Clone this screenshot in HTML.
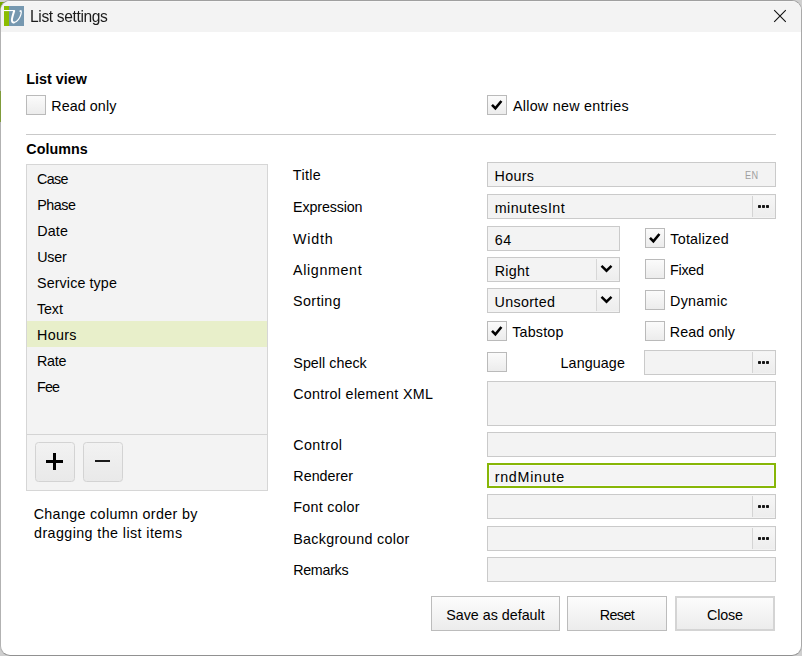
<!DOCTYPE html>
<html lang="en"><head><meta charset="utf-8"><title>List settings</title>
<style>
html,body{margin:0;padding:0;}
body{width:802px;height:656px;overflow:hidden;background:#cfcfcf;position:relative;font-family:"Liberation Sans",sans-serif;}
#bgtl{position:absolute;left:0;top:2px;width:12px;height:10px;background:#76a700;}
#bgl{position:absolute;left:0;top:91px;width:1px;height:31px;background:#7f9b3a;z-index:5;}
#win{position:absolute;left:0;top:0;width:800px;height:654px;border:1px solid #a6a6a6;border-color:#9f9f9f #a9a9a9 #919191 #b2b2b2;border-radius:10px;background:#fff;overflow:hidden;}
#in{position:absolute;left:-1px;top:-1px;width:802px;height:656px;}
#tb{position:absolute;left:0;top:0;width:802px;height:32px;background:#f3f3f3;box-shadow:inset 0 2px 0 #f7f7f7;}
.abs{position:absolute;}
.t{position:absolute;white-space:nowrap;line-height:20px;color:#000;}
.in{position:absolute;box-sizing:border-box;border:1px solid #cacaca;background:#f3f3f3;}
.in.foc{border:2px solid #87b607;background:#f4f4f4;box-shadow:inset 0 0 0 1px #fafafa;}
.lb{position:absolute;box-sizing:border-box;border:1px solid #d6d6d6;background:#f3f3f3;}
.sel{position:absolute;background:#e8efca;}
.hr{position:absolute;height:1px;background:#c9c9c9;}
.hr2{position:absolute;height:1px;background:#d4d4d4;}
.cb{position:absolute;box-sizing:border-box;width:20px;height:20px;border:1px solid #bababa;background:linear-gradient(#fbfbfb,#ececec);}
.cb svg{position:absolute;left:-1px;top:-1px;}
.pm{position:absolute;box-sizing:border-box;width:40px;height:40px;border:1px solid #d3d3d3;border-radius:3.5px;background:linear-gradient(#f2f2f2,#e9e9e9);}
.bar{position:absolute;background:#000;}
.dbtn{position:absolute;width:23px;height:21px;box-sizing:border-box;border-left:1px solid #d4d4d4;background:linear-gradient(#f6f6f6,#ededed);}
.cbtn{position:absolute;width:23px;height:21px;box-sizing:border-box;border-left:1px solid #d7d7d7;background:linear-gradient(#f6f6f6,#ededed);}
.dot{position:absolute;width:3px;height:3px;background:#161616;border-radius:0.7px;}
.btn{position:absolute;box-sizing:border-box;border:1px solid #bcbcbc;background:linear-gradient(#fcfcfc,#ececec);}
.btn.def{border:2px solid #d4d4d4;}
</style></head>
<body>
<div id="bgtl"></div><div id="bgl"></div>
<div id="win"><div id="in">
<div id="tb"></div>
<svg class="abs" style="left:4px;top:6px" width="20" height="20" viewBox="0 0 20 20">
<rect x="0" y="0" width="5" height="20" fill="#8bbd00"/><rect x="5" y="0" width="15" height="20" fill="#7698b0"/>
<rect x="0" y="4" width="10.4" height="1.1" fill="#fff"/>
<path d="M10.2 4.9 C9.4 7.6 7.9 11.6 7.9 14 C7.9 15.9 8.8 16.5 9.9 16.4" fill="none" stroke="#fff" stroke-width="2" stroke-linecap="round"/>
<path d="M9.5 16.5 C11 16.8 12.9 15.5 14.5 13.4 C15.6 12 16.4 10.2 16.9 8.4 C17.3 7 17.5 5.6 17 4.7" fill="none" stroke="#fff" stroke-width="1.25" stroke-linecap="round"/>
<circle cx="16.3" cy="5.1" r="0.9" fill="#fff"/>
</svg>
<svg class="abs" style="left:772px;top:8px" width="16" height="16" viewBox="0 0 16 16"><path d="M2.2 2.2 L13.8 13.8 M13.8 2.2 L2.2 13.8" stroke="#111" stroke-width="1.1" fill="none"/></svg>
<div class="cb" style="left:26px;top:95px"></div>
<div class="cb" style="left:487px;top:95px"><svg width="20" height="20" viewBox="0 0 20 20"><polyline points="5.0,9.8 8.4,13.3 14.4,6.0" fill="none" stroke="#000" stroke-width="2.6"/></svg></div>
<div class="hr" style="left:26px;top:134px;width:750px"></div>
<div class="lb" style="left:26px;top:164px;width:242px;height:327px;"></div>
<div class="sel" style="left:27px;top:321px;width:240px;height:26px"></div>
<div class="hr2" style="left:27px;top:434px;width:240px"></div>
<div class="pm" style="left:35px;top:442px"></div>
<div class="pm" style="left:83px;top:442px"></div>
<div class="bar" style="left:45.7px;top:460px;width:17.7px;height:2.5px"></div>
<div class="bar" style="left:53.4px;top:452.9px;width:2.5px;height:17px"></div>
<div class="bar" style="left:94.9px;top:459.8px;width:15.1px;height:2.2px;background:#1a1a1a"></div>
<div class="in" style="left:487px;top:162px;width:289px;height:25px;"></div>
<div class="in" style="left:487px;top:194px;width:289px;height:25px;"></div>
<div class="dbtn" style="left:752px;top:196px"></div><div class="dot" style="left:758px;top:205px"></div><div class="dot" style="left:762px;top:205px"></div><div class="dot" style="left:766px;top:205px"></div>
<div class="in" style="left:487px;top:226px;width:133px;height:25px;"></div>
<div class="in" style="left:487px;top:257px;width:133px;height:25px;"></div><div class="cbtn" style="left:596px;top:259px"></div><svg class="abs" style="left:598px;top:257px" width="20" height="25" viewBox="0 0 20 25"><polyline points="3.5,8.8 8.5,13.7 13.5,8.8" fill="none" stroke="#000" stroke-width="2.45"/></svg>
<div class="in" style="left:487px;top:288px;width:133px;height:25px;"></div><div class="cbtn" style="left:596px;top:290px"></div><svg class="abs" style="left:598px;top:288px" width="20" height="25" viewBox="0 0 20 25"><polyline points="3.5,8.8 8.5,13.7 13.5,8.8" fill="none" stroke="#000" stroke-width="2.45"/></svg>
<div class="cb" style="left:645px;top:228px"><svg width="20" height="20" viewBox="0 0 20 20"><polyline points="5.0,9.8 8.4,13.3 14.4,6.0" fill="none" stroke="#000" stroke-width="2.6"/></svg></div>
<div class="cb" style="left:645px;top:259px"></div>
<div class="cb" style="left:645px;top:290px"></div>
<div class="cb" style="left:487px;top:321px"><svg width="20" height="20" viewBox="0 0 20 20"><polyline points="5.0,9.8 8.4,13.3 14.4,6.0" fill="none" stroke="#000" stroke-width="2.6"/></svg></div>
<div class="cb" style="left:645px;top:321px"></div>
<div class="cb" style="left:487px;top:352px"></div>
<div class="in" style="left:644px;top:350px;width:132px;height:25px;"></div>
<div class="dbtn" style="left:752px;top:352px"></div><div class="dot" style="left:758px;top:361px"></div><div class="dot" style="left:762px;top:361px"></div><div class="dot" style="left:766px;top:361px"></div>
<div class="in" style="left:487px;top:381px;width:289px;height:45px;"></div>
<div class="in" style="left:487px;top:432px;width:289px;height:25px;"></div>
<div class="in foc" style="left:487px;top:463px;width:289px;height:25px;"></div>
<div class="in" style="left:487px;top:494px;width:289px;height:25px;"></div>
<div class="dbtn" style="left:752px;top:496px"></div><div class="dot" style="left:758px;top:505px"></div><div class="dot" style="left:762px;top:505px"></div><div class="dot" style="left:766px;top:505px"></div>
<div class="in" style="left:487px;top:526px;width:289px;height:25px;"></div>
<div class="dbtn" style="left:752px;top:528px"></div><div class="dot" style="left:758px;top:537px"></div><div class="dot" style="left:762px;top:537px"></div><div class="dot" style="left:766px;top:537px"></div>
<div class="in" style="left:487px;top:557px;width:289px;height:25px;"></div>
<div class="btn" style="left:431px;top:596px;width:129px;height:35px;"></div>
<div class="btn" style="left:567px;top:596px;width:100px;height:35px;"></div>
<div class="btn def" style="left:675px;top:596px;width:100px;height:35px;"></div>
<span class="t" id="t_title" style="left:30.09px;top:7.00px;font-size:15.6px;color:#1b1b1b;will-change:transform;letter-spacing:-0.370px;">List settings</span>
<span class="t" id="t_lv" style="left:26.13px;top:69.00px;font-size:14.3px;font-weight:700;letter-spacing:0.054px;">List view</span>
<span class="t" id="t_ro" style="left:51.22px;top:96.00px;font-size:14.3px;letter-spacing:0.089px;">Read only</span>
<span class="t" id="t_allow" style="left:512.90px;top:96.00px;font-size:14.3px;letter-spacing:0.285px;">Allow new entries</span>
<span class="t" id="t_cols" style="left:26.28px;top:139.00px;font-size:14.3px;font-weight:700;letter-spacing:0.036px;">Columns</span>
<span class="t" id="t_case" style="left:36.97px;top:169.00px;font-size:14.3px;letter-spacing:-0.626px;">Case</span>
<span class="t" id="t_phase" style="left:37.29px;top:195.00px;font-size:14.3px;letter-spacing:-0.478px;">Phase</span>
<span class="t" id="t_date" style="left:37.29px;top:221.00px;font-size:14.3px;letter-spacing:0.124px;">Date</span>
<span class="t" id="t_user" style="left:37.26px;top:247.00px;font-size:14.3px;letter-spacing:-0.202px;">User</span>
<span class="t" id="t_serv" style="left:37.07px;top:273.00px;font-size:14.3px;letter-spacing:0.100px;">Service type</span>
<span class="t" id="t_text" style="left:37.05px;top:299.00px;font-size:14.3px;letter-spacing:-0.137px;">Text</span>
<span class="t" id="t_hours" style="left:37.04px;top:325.00px;font-size:14.3px;letter-spacing:0.307px;">Hours</span>
<span class="t" id="t_rate" style="left:37.04px;top:351.00px;font-size:14.3px;letter-spacing:-0.256px;">Rate</span>
<span class="t" id="t_fee" style="left:37.04px;top:377.00px;font-size:14.3px;letter-spacing:-0.827px;">Fee</span>
<span class="t" id="t_hint1" style="left:33.65px;top:504.00px;font-size:14.3px;letter-spacing:0.343px;">Change column order by</span>
<span class="t" id="t_hint2" style="left:34.09px;top:523.00px;font-size:14.3px;letter-spacing:0.406px;">dragging the list items</span>
<span class="t" id="l_title" style="left:292.80px;top:165.00px;font-size:14.3px;letter-spacing:0.384px;">Title</span>
<span class="t" id="l_expr" style="left:293.04px;top:197.00px;font-size:14.3px;letter-spacing:-0.134px;">Expression</span>
<span class="t" id="l_width" style="left:293.09px;top:229.00px;font-size:14.3px;letter-spacing:0.785px;">Width</span>
<span class="t" id="l_align" style="left:293.06px;top:260.00px;font-size:14.3px;letter-spacing:0.627px;">Alignment</span>
<span class="t" id="l_sort" style="left:293.11px;top:291.00px;font-size:14.3px;letter-spacing:0.373px;">Sorting</span>
<span class="t" id="l_spell" style="left:293.32px;top:353.00px;font-size:14.3px;letter-spacing:0.035px;">Spell check</span>
<span class="t" id="l_xml" style="left:293.15px;top:384.00px;font-size:14.3px;letter-spacing:0.303px;">Control element XML</span>
<span class="t" id="l_ctrl" style="left:293.15px;top:435.00px;font-size:14.3px;letter-spacing:0.468px;">Control</span>
<span class="t" id="l_rend" style="left:293.34px;top:466.00px;font-size:14.3px;letter-spacing:0.014px;">Renderer</span>
<span class="t" id="l_fc" style="left:293.14px;top:497.00px;font-size:14.3px;letter-spacing:0.325px;">Font color</span>
<span class="t" id="l_bg" style="left:293.14px;top:529.00px;font-size:14.3px;letter-spacing:0.328px;">Background color</span>
<span class="t" id="l_rem" style="left:293.14px;top:560.00px;font-size:14.3px;letter-spacing:-0.281px;">Remarks</span>
<span class="t" id="v_hours" style="left:494.51px;top:166.00px;font-size:14.3px;letter-spacing:0.311px;">Hours</span>
<span class="t" id="v_min" style="left:494.65px;top:198.00px;font-size:14.3px;letter-spacing:0.462px;">minutesInt</span>
<span class="t" id="v_64" style="left:494.77px;top:230.00px;font-size:14.3px;letter-spacing:0.459px;">64</span>
<span class="t" id="v_right" style="left:494.64px;top:261.00px;font-size:14.3px;letter-spacing:0.305px;">Right</span>
<span class="t" id="v_uns" style="left:494.50px;top:292.00px;font-size:14.3px;letter-spacing:0.343px;">Unsorted</span>
<span class="t" id="v_rnd" style="left:494.65px;top:467.00px;font-size:14.3px;letter-spacing:0.746px;">rndMinute</span>
<span class="t" id="v_en" style="left:745.29px;top:165.00px;font-size:10.6px;color:#a0a0a0;transform:scaleX(0.86);transform-origin:0 0;letter-spacing:0.500px;">EN</span>
<span class="t" id="c_tot" style="left:670.33px;top:229.00px;font-size:14.3px;letter-spacing:0.234px;">Totalized</span>
<span class="t" id="c_fix" style="left:670.11px;top:260.00px;font-size:14.3px;letter-spacing:-0.267px;">Fixed</span>
<span class="t" id="c_dyn" style="left:670.11px;top:291.00px;font-size:14.3px;letter-spacing:0.264px;">Dynamic</span>
<span class="t" id="c_tab" style="left:512.23px;top:322.00px;font-size:14.3px;letter-spacing:0.181px;">Tabstop</span>
<span class="t" id="c_ro" style="left:669.87px;top:322.00px;font-size:14.3px;letter-spacing:0.073px;">Read only</span>
<span class="t" id="c_lang" style="left:560.54px;top:353.00px;font-size:14.3px;letter-spacing:0.105px;">Language</span>
<span class="t" id="b_save" style="left:446.21px;top:605.00px;font-size:14.3px;letter-spacing:-0.003px;">Save as default</span>
<span class="t" id="b_reset" style="left:599.64px;top:605.00px;font-size:14.3px;letter-spacing:-0.535px;">Reset</span>
<span class="t" id="b_close" style="left:706.97px;top:605.00px;font-size:14.3px;letter-spacing:-0.142px;">Close</span>
</div></div>
</body></html>
